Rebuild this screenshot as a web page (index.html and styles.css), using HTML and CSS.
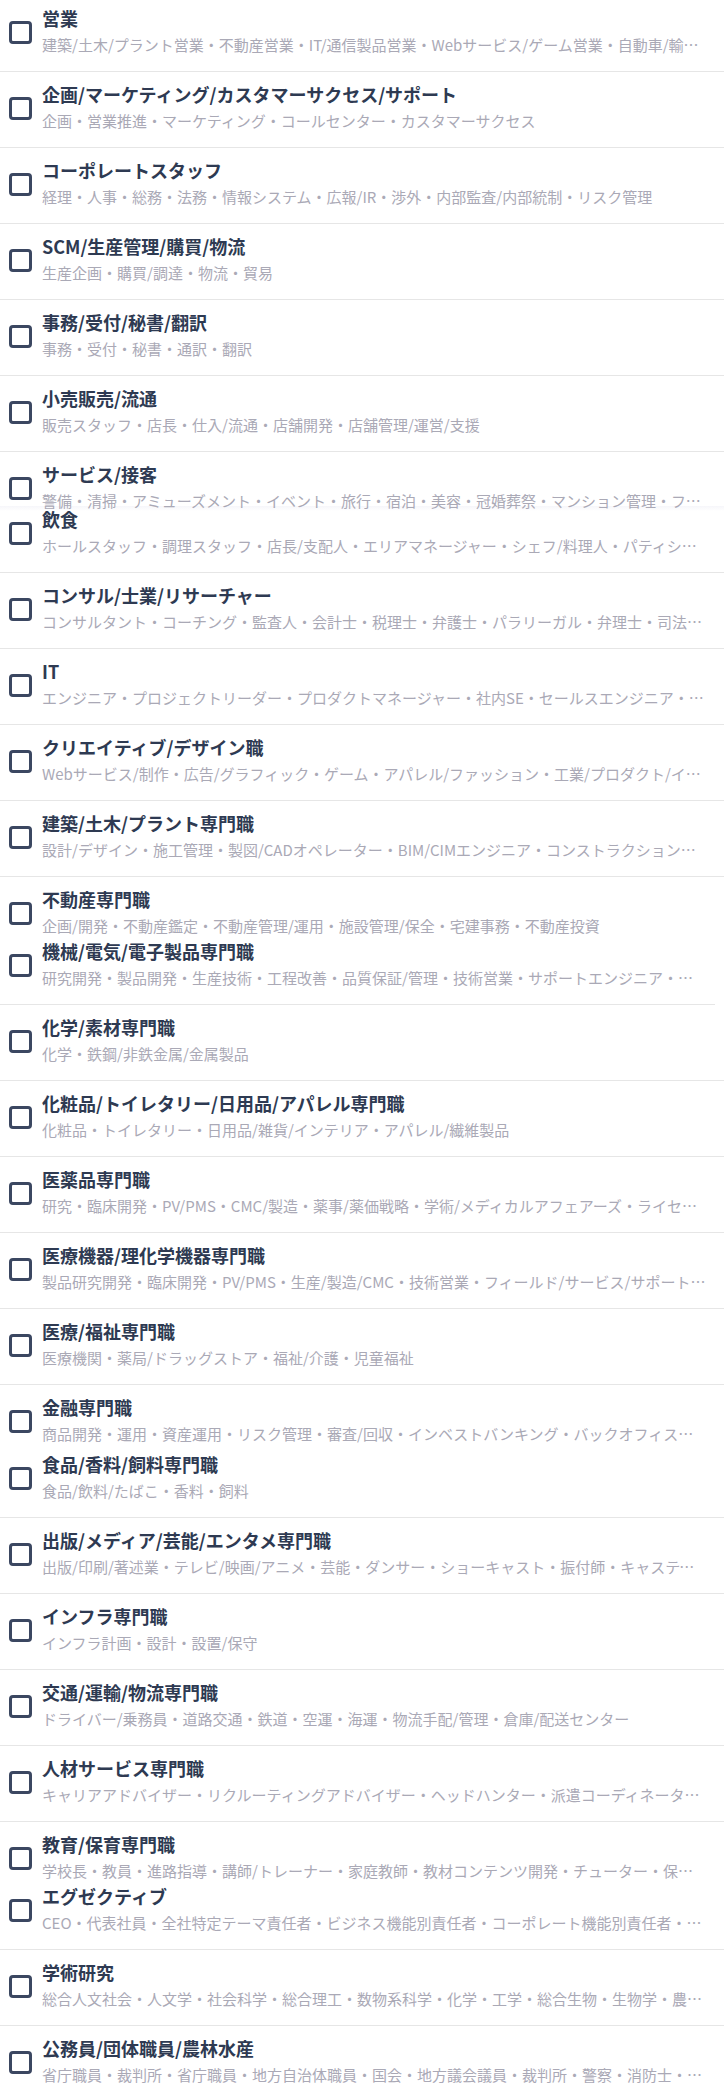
FILE: index.html
```html
<!DOCTYPE html>
<html lang="ja">
<head>
<meta charset="UTF-8">
<meta name="viewport" content="width=device-width, initial-scale=1.0">
<title>職種を選択</title>
<link rel="stylesheet" href="styles.css">
</head>
<body>

<div class="liste-metiers">

  <label class="metier">
    <span class="case"></span>
    <span class="texte">
      <span class="titre">営業</span>
      <span class="sous">建築/土木/プラント営業・不動産営業・IT/通信製品営業・Webサービス/ゲーム営業・自動車/輸送機器営業・医療営業</span>
    </span>
  </label>

  <label class="metier">
    <span class="case"></span>
    <span class="texte">
      <span class="titre">企画/マーケティング/カスタマーサクセス/サポート</span>
      <span class="sous">企画・営業推進・マーケティング・コールセンター・カスタマーサクセス</span>
    </span>
  </label>

  <label class="metier">
    <span class="case"></span>
    <span class="texte">
      <span class="titre">コーポレートスタッフ</span>
      <span class="sous">経理・人事・総務・法務・情報システム・広報/IR・渉外・内部監査/内部統制・リスク管理</span>
    </span>
  </label>

  <label class="metier">
    <span class="case"></span>
    <span class="texte">
      <span class="titre">SCM/生産管理/購買/物流</span>
      <span class="sous">生産企画・購買/調達・物流・貿易</span>
    </span>
  </label>

  <label class="metier">
    <span class="case"></span>
    <span class="texte">
      <span class="titre">事務/受付/秘書/翻訳</span>
      <span class="sous">事務・受付・秘書・通訳・翻訳</span>
    </span>
  </label>

  <label class="metier">
    <span class="case"></span>
    <span class="texte">
      <span class="titre">小売販売/流通</span>
      <span class="sous">販売スタッフ・店長・仕入/流通・店舗開発・店舗管理/運営/支援</span>
    </span>
  </label>

  <!-- the next item is drawn over this one (list glitch in the capture) -->
  <label class="metier coupe coupe-45">
    <span class="case"></span>
    <span class="texte">
      <span class="titre">サービス/接客</span>
      <span class="sous">警備・清掃・アミューズメント・イベント・旅行・宿泊・美容・冠婚葬祭・マンション管理・フィットネス</span>
    </span>
  </label>

  <label class="metier fondu">
    <span class="case"></span>
    <span class="texte">
      <span class="titre">飲食</span>
      <span class="sous">ホールスタッフ・調理スタッフ・店長/支配人・エリアマネージャー・シェフ/料理人・パティシエ・バーテンダー</span>
    </span>
  </label>

  <label class="metier">
    <span class="case"></span>
    <span class="texte">
      <span class="titre">コンサル/士業/リサーチャー</span>
      <span class="sous">コンサルタント・コーチング・監査人・会計士・税理士・弁護士・パラリーガル・弁理士・司法書士</span>
    </span>
  </label>

  <label class="metier">
    <span class="case"></span>
    <span class="texte">
      <span class="titre">IT</span>
      <span class="sous">エンジニア・プロジェクトリーダー・プロダクトマネージャー・社内SE・セールスエンジニア・コンサルタント</span>
    </span>
  </label>

  <label class="metier">
    <span class="case"></span>
    <span class="texte">
      <span class="titre">クリエイティブ/デザイン職</span>
      <span class="sous">Webサービス/制作・広告/グラフィック・ゲーム・アパレル/ファッション・工業/プロダクト/インテリア</span>
    </span>
  </label>

  <label class="metier">
    <span class="case"></span>
    <span class="texte">
      <span class="titre">建築/土木/プラント専門職</span>
      <span class="sous">設計/デザイン・施工管理・製図/CADオペレーター・BIM/CIMエンジニア・コンストラクションマネジメント</span>
    </span>
  </label>

  <label class="metier coupe coupe-52">
    <span class="case"></span>
    <span class="texte">
      <span class="titre">不動産専門職</span>
      <span class="sous">企画/開発・不動産鑑定・不動産管理/運用・施設管理/保全・宅建事務・不動産投資</span>
    </span>
  </label>

  <label class="metier court">
    <span class="case"></span>
    <span class="texte">
      <span class="titre">機械/電気/電子製品専門職</span>
      <span class="sous">研究開発・製品開発・生産技術・工程改善・品質保証/管理・技術営業・サポートエンジニア・設計</span>
    </span>
  </label>

  <label class="metier">
    <span class="case"></span>
    <span class="texte">
      <span class="titre">化学/素材専門職</span>
      <span class="sous">化学・鉄鋼/非鉄金属/金属製品</span>
    </span>
  </label>

  <label class="metier">
    <span class="case"></span>
    <span class="texte">
      <span class="titre">化粧品/トイレタリー/日用品/アパレル専門職</span>
      <span class="sous">化粧品・トイレタリー・日用品/雑貨/インテリア・アパレル/繊維製品</span>
    </span>
  </label>

  <label class="metier">
    <span class="case"></span>
    <span class="texte">
      <span class="titre">医薬品専門職</span>
      <span class="sous">研究・臨床開発・PV/PMS・CMC/製造・薬事/薬価戦略・学術/メディカルアフェアーズ・ライセンス</span>
    </span>
  </label>

  <label class="metier">
    <span class="case"></span>
    <span class="texte">
      <span class="titre">医療機器/理化学機器専門職</span>
      <span class="sous">製品研究開発・臨床開発・PV/PMS・生産/製造/CMC・技術営業・フィールド/サービス/サポートエンジニア</span>
    </span>
  </label>

  <label class="metier">
    <span class="case"></span>
    <span class="texte">
      <span class="titre">医療/福祉専門職</span>
      <span class="sous">医療機関・薬局/ドラッグストア・福祉/介護・児童福祉</span>
    </span>
  </label>

  <label class="metier coupe coupe-57">
    <span class="case"></span>
    <span class="texte">
      <span class="titre">金融専門職</span>
      <span class="sous">商品開発・運用・資産運用・リスク管理・審査/回収・インベストバンキング・バックオフィス・アクチュアリー</span>
    </span>
  </label>

  <label class="metier">
    <span class="case"></span>
    <span class="texte">
      <span class="titre">食品/香料/飼料専門職</span>
      <span class="sous">食品/飲料/たばこ・香料・飼料</span>
    </span>
  </label>

  <label class="metier">
    <span class="case"></span>
    <span class="texte">
      <span class="titre">出版/メディア/芸能/エンタメ専門職</span>
      <span class="sous">出版/印刷/著述業・テレビ/映画/アニメ・芸能・ダンサー・ショーキャスト・振付師・キャスティング</span>
    </span>
  </label>

  <label class="metier">
    <span class="case"></span>
    <span class="texte">
      <span class="titre">インフラ専門職</span>
      <span class="sous">インフラ計画・設計・設置/保守</span>
    </span>
  </label>

  <label class="metier">
    <span class="case"></span>
    <span class="texte">
      <span class="titre">交通/運輸/物流専門職</span>
      <span class="sous">ドライバー/乗務員・道路交通・鉄道・空運・海運・物流手配/管理・倉庫/配送センター</span>
    </span>
  </label>

  <label class="metier">
    <span class="case"></span>
    <span class="texte">
      <span class="titre">人材サービス専門職</span>
      <span class="sous">キャリアアドバイザー・リクルーティングアドバイザー・ヘッドハンター・派遣コーディネーター・人材紹介営業</span>
    </span>
  </label>

  <label class="metier coupe coupe-52">
    <span class="case"></span>
    <span class="texte">
      <span class="titre">教育/保育専門職</span>
      <span class="sous">学校長・教員・進路指導・講師/トレーナー・家庭教師・教材コンテンツ開発・チューター・保育士</span>
    </span>
  </label>

  <label class="metier">
    <span class="case"></span>
    <span class="texte">
      <span class="titre">エグゼクティブ</span>
      <span class="sous">CEO・代表社員・全社特定テーマ責任者・ビジネス機能別責任者・コーポレート機能別責任者・事業責任者</span>
    </span>
  </label>

  <label class="metier">
    <span class="case"></span>
    <span class="texte">
      <span class="titre">学術研究</span>
      <span class="sous">総合人文社会・人文学・社会科学・総合理工・数物系科学・化学・工学・総合生物・生物学・農学・医歯薬学</span>
    </span>
  </label>

  <label class="metier">
    <span class="case"></span>
    <span class="texte">
      <span class="titre">公務員/団体職員/農林水産</span>
      <span class="sous">省庁職員・裁判所・省庁職員・地方自治体職員・国会・地方議会議員・裁判所・警察・消防士・自衛官</span>
    </span>
  </label>

</div>

</body>
</html>
```

FILE: styles.css
```css
body {
  margin: 0;
  background-color: #ffffff;
  font-family: "Noto Sans CJK JP", "Noto Sans", sans-serif;
  color: #2e3a52;
}

.liste-metiers {
  /* the capture is scrolled a few pixels */
  margin-top: -4px;
}

.metier {
  display: flex;
  align-items: flex-start;
  gap: 10px;
  height: 76px;
  padding: 9px 18px 0 9px;
  box-sizing: border-box;
  border-bottom: 1px solid #e6e6e6;
  cursor: pointer;
}

.case {
  flex: none;
  width: 23px;
  height: 23px;
  margin-top: 16px;
  box-sizing: border-box;
  border: 3px solid #3b4761;
  border-radius: 4px;
}

.texte {
  display: flex;
  flex-direction: column;
  min-width: 0;
  flex: 1;
}

.titre {
  font-size: 18px;
  font-weight: bold;
  line-height: 26px;
  color: #2e3a52;
  white-space: nowrap;
}

.sous {
  margin-top: 4px;
  font-size: 15px;
  line-height: 20px;
  color: #aaa9b6;
  white-space: nowrap;
  overflow: hidden;
  text-overflow: ellipsis;
}

/* items the next one is painted over */
.coupe {
  border-bottom: none;
}
.coupe-45 { height: 45px; }
.coupe-52 { height: 52px; }
.coupe-57 { height: 57px; }

.fondu {
  background: linear-gradient(transparent 9px, #f6f6fa 9px, #ffffff 14px);
}

.court {
  border-bottom: none;
  background: linear-gradient(#e6e6e6, #e6e6e6) no-repeat left bottom / 715px 1px;
}
```
